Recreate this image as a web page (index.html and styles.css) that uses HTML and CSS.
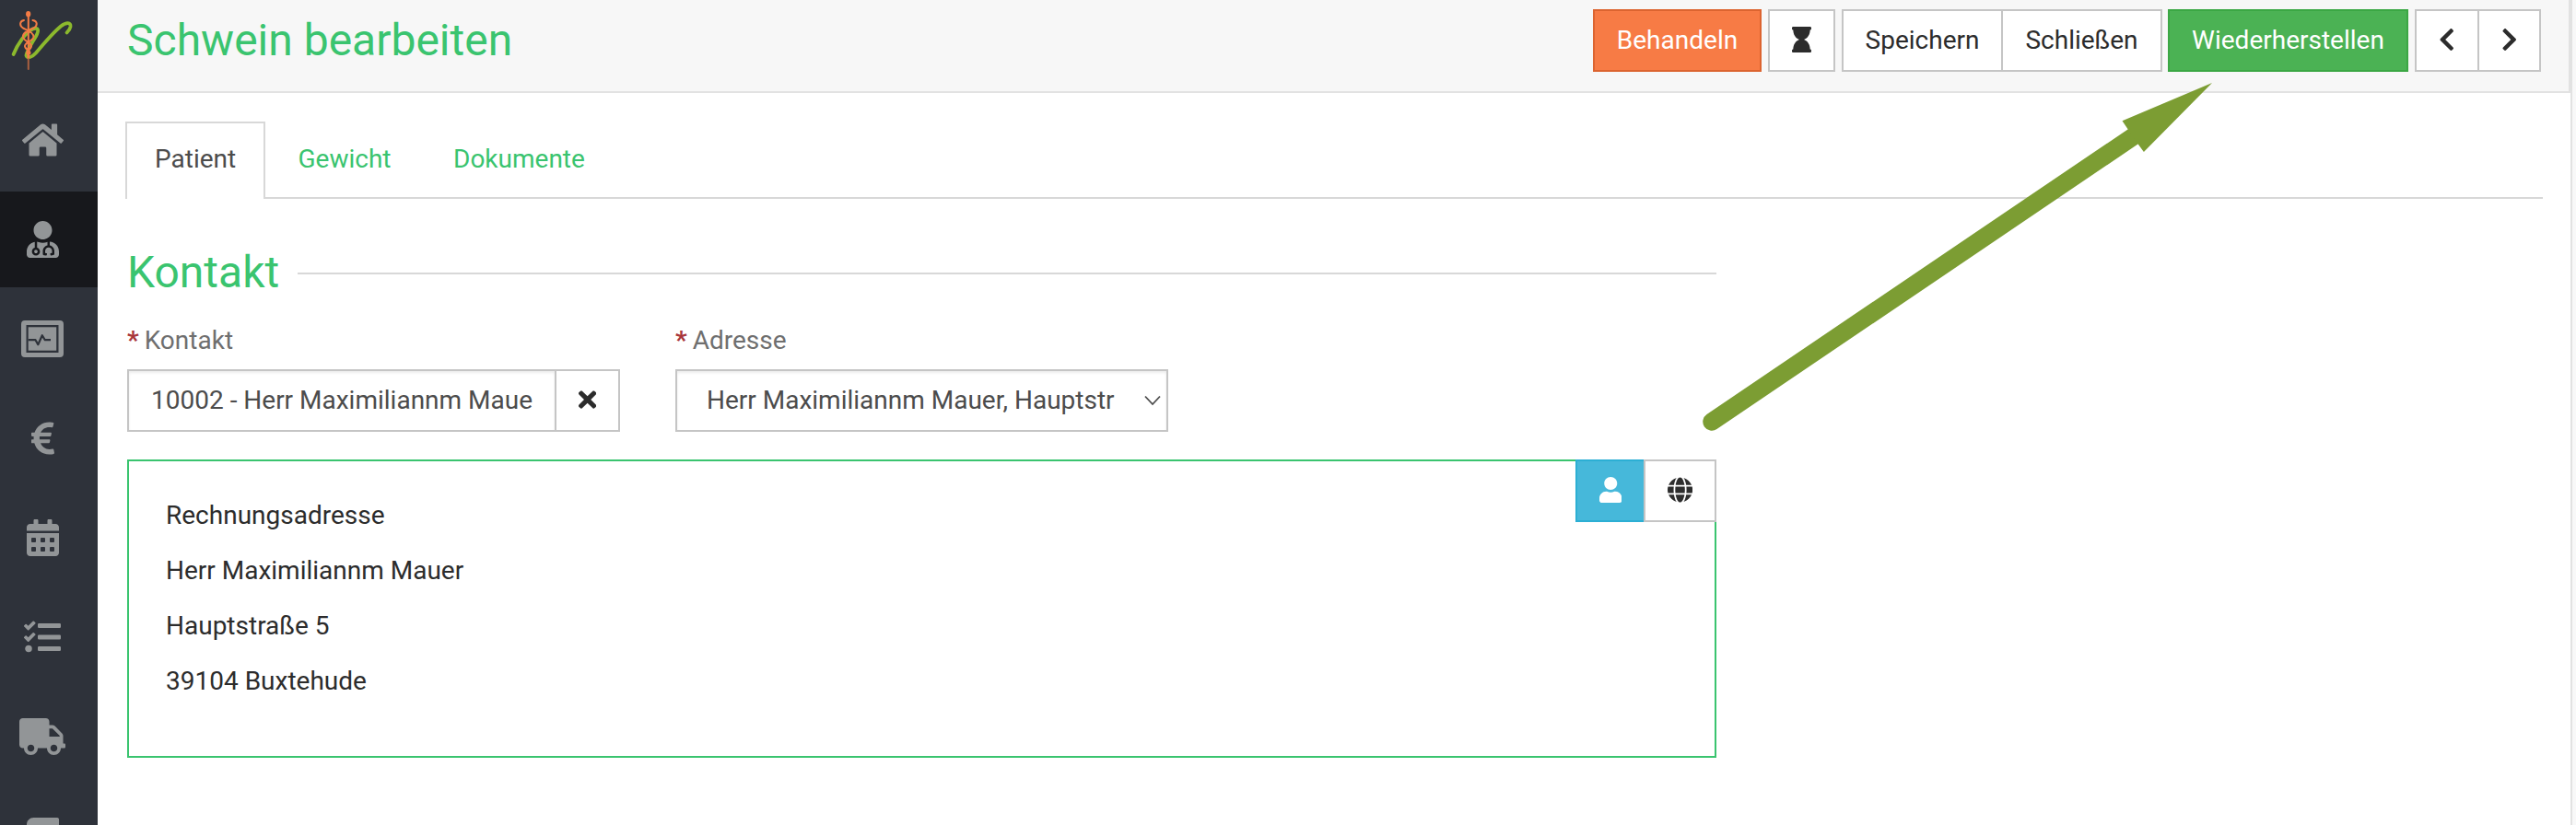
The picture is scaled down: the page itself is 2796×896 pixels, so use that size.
FILE: index.html
```html
<!DOCTYPE html>
<html lang="de">
<head>
<meta charset="utf-8">
<title>Schwein bearbeiten</title>
<link rel="stylesheet" href="styles.css">
</head>
<body>
<div class="app">
  <nav class="sidebar">
    <a class="logo">
      <svg width="76" height="76" viewBox="0 0 76 76" fill="none" stroke-linecap="round">
        <path d="M6.600 53C11 42 20 29 27.500 25.500C34 23 34.500 27 31 33.500C27 40 20 51 20.500 54.500C21.500 58 27 56 31 51.500C39 42 50 29 58 22.500C64 18 69 18 68.500 23C68 26 66 28 64.500 29.500" stroke="#8cb92d" stroke-width="3.800"/>
        <g stroke="#f47c45" stroke-width="2">
          <path d="M22.800 10V52"/>
          <path d="M22.800 52V69" stroke="#a9603f"/>
          <path d="M18 16C13 17 13 22 17 24.500C21 26.500 29 29 28.500 34C28 39 18 40 19 44.500C19.500 48 25 48 24.500 52M27.500 16C33 17 33 22 28.500 24.500C24 26.500 16.500 29 17 34C17.500 39 26.500 40 26 44.500C25.500 48 20.500 48 21 52"/>
          <path d="M22.800 50V56" stroke-width="3"/>
        </g>
        <ellipse cx="22.700" cy="9.200" rx="2.600" ry="3.200" fill="#f47c45"/>
      </svg>
    </a>
    <a class="nav-item"><svg width="45" height="40" viewBox="0 0 576 512"><path d="M280.37 148.26L96 300.11V464a16 16 0 0 0 16 16l112.06-.29a16 16 0 0 0 15.92-16V368a16 16 0 0 1 16-16h64a16 16 0 0 1 16 16v95.64a16 16 0 0 0 16 16.05L464 480a16 16 0 0 0 16-16V300L295.67 148.26a12.19 12.19 0 0 0-15.3 0zM571.6 251.47L488 182.56V44.050a12 12 0 0 0-12-12h-56a12 12 0 0 0-12 12v72.610L318.47 43a48 48 0 0 0-61 0L4.340 251.47a12 12 0 0 0-1.600 16.900l25.500 31A12 12 0 0 0 45.150 301l235.22-193.74a12.190 12.190 0 0 1 15.300 0L530.9 301a12 12 0 0 0 16.900-1.600l25.500-31a12 12 0 0 0-1.700-16.930z"/></svg></a>
    <a class="nav-item active"><svg width="35" height="40" viewBox="0 0 448 512"><path d="M224 256c70.700 0 128-57.300 128-128S294.700 0 224 0 96 57.300 96 128s57.300 128 128 128zM104 424c0 13.300 10.700 24 24 24s24-10.700 24-24-10.700-24-24-24-24 10.700-24 24zm216-135.400v49c36.500 7.400 64 39.800 64 78.400v41.700c0 7.600-5.400 14.200-12.900 15.700l-32.200 6.400c-4.300.9-8.500-1.900-9.400-6.300l-3.100-15.700c-.9-4.300 1.900-8.600 6.300-9.400l19.300-3.900V416c0-62.800-96-65.100-96 1.900v26.700l19.300 3.900c4.300.9 7.100 5.100 6.300 9.400l-3.100 15.700c-.9 4.300-5.100 7.100-9.400 6.300l-31.200-4.200c-7.900-1.100-13.800-7.800-13.800-15.900V416c0-38.600 27.500-70.900 64-78.400v-45.200c-2.200.7-4.400 1.100-6.600 1.900-18 6.300-37.300 9.800-57.400 9.800s-39.400-3.500-57.400-9.800c-7.400-2.600-14.900-4.200-22.600-5.200v81.600c23.100 6.900 40 28.100 40 53.400 0 30.900-25.100 56-56 56s-56-25.100-56-56c0-25.300 16.900-46.500 40-53.400v-80.400C48.500 301 0 355.800 0 422.400v44.800C0 491.900 20.100 512 44.800 512h358.400c24.700 0 44.800-20.100 44.800-44.800v-44.800c0-72-56.800-130.300-128-133.800z"/></svg></a>
    <a class="nav-item"><svg width="46" height="40" viewBox="0 0 46 40"><path fill-rule="evenodd" d="M4 0H42a4 4 0 0 1 4 4V36a4 4 0 0 1-4 4H4a4 4 0 0 1-4-4V4a4 4 0 0 1 4-4zM5.500 5V35H40.500V5z"/><path d="M7.700 7.300H38.200V32.700H7.700z"/><path class="pulse" d="M7.700 21.200H15.500L18.300 26.200L22.800 16.200L25.800 21.200H32"/></svg></a>
    <a class="nav-item"><svg width="25" height="40" viewBox="0 0 320 512"><path d="M310.706 413.765c-1.314-6.630-7.835-10.872-14.424-9.369-10.692 2.439-27.422 5.413-45.426 5.413-56.763 0-101.929-34.790-121.461-85.449h113.689a12 12 0 0 0 11.708-9.369l6.373-28.360c1.686-7.502-4.019-14.631-11.708-14.631H115.220c-1.210-14.328-1.414-28.287.137-42.245H261.950a12 12 0 0 0 11.723-9.434l6.512-29.755c1.638-7.484-4.061-14.566-11.723-14.566H130.184c20.633-44.991 62.690-75.030 117.619-75.030 14.486 0 28.564 2.250 37.851 4.145 6.216 1.268 12.347-2.498 14.002-8.623l11.991-44.368c1.822-6.741-2.465-13.616-9.326-14.917C290.217 34.912 270.710 32 249.635 32 152.451 32 74.030 92.252 45.075 176H12c-6.627 0-12 5.373-12 12v29.755c0 6.627 5.373 12 12 12h21.569c-1.009 13.607-1.181 29.287-.181 42.245H12c-6.627 0-12 5.373-12 12v28.360c0 6.627 5.373 12 12 12h30.114C67.139 414.692 145.264 480 249.635 480c26.301 0 48.562-4.544 61.101-7.788 6.167-1.595 10.027-7.708 8.788-13.957l-8.818-44.490z"/></svg></a>
    <a class="nav-item"><svg width="35" height="40" viewBox="0 0 448 512"><path fill-rule="evenodd" d="M400 64h-48V16c0-8.800-7.200-16-16-16h-32c-8.800 0-16 7.200-16 16v48H160V16c0-8.800-7.200-16-16-16h-32c-8.800 0-16 7.200-16 16v48H48C21.500 64 0 85.500 0 112v48h448v-48c0-26.500-21.500-48-48-48zM0 192v272c0 26.500 21.500 48 48 48h352c26.500 0 48-21.500 48-48V192zM76 256h40q12 0 12 12v40q0 12-12 12H76q-12 0-12-12v-40q0-12 12-12zM204 256h40q12 0 12 12v40q0 12-12 12h-40q-12 0-12-12v-40q0-12 12-12zM332 256h40q12 0 12 12v40q0 12-12 12h-40q-12 0-12-12v-40q0-12 12-12zM76 384h40q12 0 12 12v40q0 12-12 12H76q-12 0-12-12v-40q0-12 12-12zM204 384h40q12 0 12 12v40q0 12-12 12h-40q-12 0-12-12v-40q0-12 12-12zM332 384h40q12 0 12 12v40q0 12-12 12h-40q-12 0-12-12v-40q0-12 12-12z"/></svg></a>
    <a class="nav-item"><svg width="40" height="40" viewBox="0 0 512 512"><path d="M139.610 35.500a12 12 0 0 0-17 0L58.930 98.810l-22.700-22.120a12 12 0 0 0-17 0L3.530 92.410a12 12 0 0 0 0 17l47.590 47.400a12.780 12.780 0 0 0 17.610 0l15.590-15.620L156.520 69a12.090 12.090 0 0 0 .09-17zm0 159.190a12 12 0 0 0-17 0l-63.680 63.720-22.700-22.100a12 12 0 0 0-17 0L3.530 252a12 12 0 0 0 0 17L51 316.500a12.770 12.770 0 0 0 17.600 0l15.700-15.690 72.200-72.220a12 12 0 0 0 .09-16.900zM64 368c-26.490 0-48.590 21.500-48.590 48S37.530 464 64 464a48 48 0 0 0 0-96zm432 16H208a16 16 0 0 0-16 16v32a16 16 0 0 0 16 16h288a16 16 0 0 0 16-16v-32a16 16 0 0 0-16-16zm0-320H208a16 16 0 0 0-16 16v32a16 16 0 0 0 16 16h288a16 16 0 0 0 16-16V80a16 16 0 0 0-16-16zm0 160H208a16 16 0 0 0-16 16v32a16 16 0 0 0 16 16h288a16 16 0 0 0 16-16v-32a16 16 0 0 0-16-16z"/></svg></a>
    <a class="nav-item"><svg width="50" height="40" viewBox="0 0 640 512"><path d="M624 352h-16V243.900c0-12.700-5.100-24.900-14.100-33.900L494 110.100c-9-9-21.200-14.100-33.900-14.100H416V48c0-26.500-21.500-48-48-48H48C21.500 0 0 21.500 0 48v320c0 26.500 21.500 48 48 48h16c0 53 43 96 96 96s96-43 96-96h128c0 53 43 96 96 96s96-43 96-96h48c8.800 0 16-7.200 16-16v-32c0-8.800-7.200-16-16-16zM160 464c-26.500 0-48-21.500-48-48s21.500-48 48-48 48 21.500 48 48-21.500 48-48 48zm320 0c-26.500 0-48-21.500-48-48s21.500-48 48-48 48 21.500 48 48-21.500 48-48 48zm80-208H416V144h44.100l99.900 99.900V256z"/></svg></a>
    <a class="nav-item"><svg width="35" height="40" viewBox="0 0 448 512"><path d="M448 360V24c0-13.300-10.700-24-24-24H96C43 0 0 43 0 96v320c0 53 43 96 96 96h352z"/></svg></a>
  </nav>

  <main class="panel">
    <header class="header">
      <h1 class="title">Schwein bearbeiten</h1>
      <div class="toolbar">
        <button class="btn btn-orange w-treat">Behandeln</button>
        <button class="btn w-wait"><svg width="21" height="28" viewBox="0 0 384 512"><path d="M360 64c13.255 0 24-10.745 24-24V24c0-13.255-10.745-24-24-24H24C10.745 0 0 10.745 0 24v16c0 13.255 10.745 24 24 24 0 90.965 51.016 167.734 120.842 192C75.016 280.266 24 357.035 24 448c-13.255 0-24 10.745-24 24v16c0 13.255 10.745 24 24 24h336c13.255 0 24-10.745 24-24v-16c0-13.255-10.745-24-24-24 0-90.965-51.016-167.734-120.842-192C308.984 231.734 360 154.965 360 64z"/></svg></button>
        <div class="group">
          <button class="btn w-save">Speichern</button>
          <button class="btn w-close">Schließen</button>
        </div>
        <button class="btn btn-green w-restore">Wiederherstellen</button>
        <div class="group">
          <button class="btn w-prev"><svg width="17.500" height="28" viewBox="0 0 320 512"><path d="M34.520 239.030L228.870 44.690c9.370-9.370 24.570-9.370 33.940 0l22.670 22.670c9.360 9.360 9.370 24.520.04 33.900L131.490 256l154.020 154.750c9.340 9.380 9.320 24.540-.04 33.900l-22.670 22.670c-9.370 9.370-24.570 9.370-33.940 0L34.520 272.970c-9.370-9.370-9.370-24.570 0-33.940z"/></svg></button>
          <button class="btn w-next"><svg width="17.500" height="28" viewBox="0 0 320 512"><path d="M285.476 272.971L91.132 467.314c-9.373 9.373-24.569 9.373-33.941 0l-22.667-22.667c-9.357-9.357-9.375-24.522-.04-33.901L188.505 256 34.484 101.255c-9.335-9.379-9.317-24.544.04-33.901l22.667-22.667c9.373-9.373 24.569-9.373 33.941 0L285.475 239.030c9.373 9.372 9.373 24.568.001 33.941z"/></svg></button>
        </div>
      </div>
    </header>

    <div class="content">
      <div class="tabs">
        <a class="tab tab-active">Patient</a>
        <a class="tab">Gewicht</a>
        <a class="tab">Dokumente</a>
      </div>

      <section class="contact">
        <h2 class="legend">Kontakt</h2>
        <div class="fields">
          <div class="field">
            <label class="label"><b class="req">*</b> Kontakt</label>
            <div class="input-group">
              <div class="control control-text">10002 - Herr Maximiliannm Maue</div>
              <button class="btn clear"><svg width="19.250" height="28" viewBox="0 0 352 512"><path d="M242.720 256l100.070-100.070c12.280-12.280 12.280-32.190 0-44.480l-22.240-22.240c-12.280-12.280-32.190-12.280-44.480 0L176 189.280 75.930 89.210c-12.280-12.280-32.190-12.280-44.480 0L9.210 111.450c-12.280 12.280-12.280 32.190 0 44.480L109.280 256 9.210 356.070c-12.280 12.280-12.280 32.190 0 44.480l22.240 22.240c12.280 12.280 32.200 12.280 44.480 0L176 322.720l100.070 100.070c12.280 12.280 32.200 12.280 44.480 0l22.240-22.240c12.280-12.280 12.280-32.190 0-44.480L242.720 256z"/></svg></button>
            </div>
          </div>
          <div class="field">
            <label class="label"><b class="req">*</b> Adresse</label>
            <div class="control control-select">
              <span>Herr Maximiliannm Mauer, Hauptstr</span>
              <svg class="caret" width="18" height="12" viewBox="0 0 18 12"><path d="M1 1.500L9 10L17 1.500"/></svg>
            </div>
          </div>
        </div>
        <div class="card">
          <div class="card-tools">
            <button class="btn btn-blue w-person"><svg width="24.500" height="28" viewBox="0 0 448 512"><path d="M224 256c70.700 0 128-57.300 128-128S294.700 0 224 0 96 57.300 96 128s57.300 128 128 128zm89.600 32h-16.700c-22.200 10.200-46.900 16-72.900 16s-50.600-5.800-72.900-16h-16.700C60.200 288 0 348.200 0 422.400V464c0 26.500 21.500 48 48 48h352c26.500 0 48-21.500 48-48v-41.600c0-74.200-60.200-134.400-134.400-134.400z"/></svg></button>
            <button class="btn w-globe"><svg width="27.125" height="28" viewBox="0 0 496 512"><path d="M336.500 160C322 70.700 287.800 8 248 8s-74 62.700-88.500 152h177zM152 256c0 22.200 1.200 43.500 3.300 64h185.300c2.100-20.500 3.300-41.800 3.300-64s-1.200-43.500-3.300-64H155.300c-2.100 20.500-3.300 41.800-3.300 64zm324.700-96c-28.600-67.900-86.500-120.400-158-141.600 24.400 33.800 41.200 84.700 50 141.600h108zM177.200 18.400C105.800 39.600 47.800 92.100 19.300 160h108c8.700-56.900 25.500-107.800 49.900-141.600zM487.400 192H372.700c2.100 21 3.300 42.500 3.300 64s-1.200 43-3.300 64h114.600c5.500-20.500 8.600-41.800 8.600-64s-3.100-43.500-8.500-64zM120 256c0-21.500 1.200-43 3.300-64H8.600C3.200 212.500 0 233.800 0 256s3.200 43.500 8.600 64h114.600c-2-21-3.200-42.500-3.200-64zm39.500 96c14.500 89.300 48.700 152 88.500 152s74-62.700 88.500-152h-177zm159.300 141.600c71.400-21.200 129.400-73.700 158-141.600h-108c-8.800 56.900-25.600 107.800-50 141.600zM19.300 352c28.600 67.900 86.500 120.400 158 141.600-24.400-33.800-41.200-84.700-50-141.600h-108z"/></svg></button>
          </div>
          <p>Rechnungsadresse</p>
          <p>Herr Maximiliannm Mauer</p>
          <p>Hauptstraße 5</p>
          <p>39104 Buxtehude</p>
        </div>
      </section>
    </div>
  </main>

  <svg class="arrow" width="560" height="390" viewBox="1846 84 560 390">
    <path d="M1858 458L2318 146.500" stroke="#7c9d33" stroke-width="19.500" stroke-linecap="round"/>
    <path d="M2401 90L2303.500 131.300L2309.900 140.700L2320.500 156.300L2326.900 165z" fill="#7c9d33"/>
  </svg>
</div>
</body>
</html>
```
FILE: styles.css
```css
* { box-sizing: border-box; }

body {
  margin: 0;
  background: #f8f8f8;
  color: #2c2c2c;
  font: 28px/40px Roboto, "Liberation Sans", sans-serif;
}

svg { display: block; flex: none; fill: currentColor; }

.app {
  position: relative;
  display: flex;
  width: 2796px;
  height: 896px;
  overflow: hidden;
}

/* Sidebar */
.sidebar {
  flex: none;
  width: 106px;
  display: flex;
  flex-direction: column;
  gap: 4px;
  background: #2e323a;
  color: #929597;
}
.logo { flex: none; height: 96px; padding: 6px 0 0 8px; }
.logo svg { fill: none; }
.nav-item {
  flex: none;
  height: 104px;
  display: flex;
  align-items: center;
  justify-content: center;
  padding-right: 14px;
}
.nav-item.active { background: #17181c; }
.logo + .nav-item { margin-top: 0; }
.pulse { fill: none; stroke: #2e323a; stroke-width: 2.2; stroke-linejoin: round; }

/* Panel and header */
.panel {
  flex: none;
  width: 2686px;
  background: #fff;
  border-right: 2px solid #e2e2e2;
}
.header {
  height: 101px;
  display: flex;
  justify-content: space-between;
  align-items: flex-start;
  padding: 10px 30px 0 32px;
  background: #f7f7f7;
  border-right: 2px solid #e2e2e2;
  border-bottom: 2px solid #e2e2e2;
}
.title, .legend { margin: 0; font-size: 48px; font-weight: 400; color: #3ac46f; }
.title { line-height: 67px; }
.toolbar { display: flex; gap: 7px; }
.group { display: flex; }
.group .btn + .btn { margin-left: -2px; }

.btn {
  flex: none;
  height: 68px;
  display: flex;
  align-items: center;
  justify-content: center;
  margin: 0;
  padding: 0;
  border: 2px solid #c5c5c5;
  border-radius: 0;
  background: #fff;
  color: #2c2c2c;
  font: inherit;
}
.btn svg { margin-bottom: 3px; }
.btn-orange { background: #f77b45; border-color: #dc6430; color: #fff; }
.btn-green { background: #4bb254; border-color: #3ba744; color: #fff; }
.btn-blue { background: #46b8da; border-color: #2cafd4; color: #fff; }
.w-treat { width: 183px; }
.w-wait { width: 73px; }
.w-save { width: 175px; }
.w-close { width: 175px; }
.w-restore { width: 261px; margin-left: -1px; }
.w-prev { width: 70px; }
.w-next { width: 69px; }

/* Tabs */
.content { padding: 31px 30px 0 30px; }
.tabs {
  height: 84px;
  display: flex;
  gap: 3.5px;
  border-bottom: 2px solid #d8d8d8;
}
.tab {
  height: 84px;
  padding: 19px 30px 0;
  border: 2px solid transparent;
  border-bottom: 0;
  color: #3ac46f;
}
.tab-active {
  width: 152px;
  background: #fff;
  border-color: #d8d8d8;
  color: #4c4c4c;
}

/* Contact section */
.contact { width: 1727px; padding: 49px 0 0 2px; }
.legend {
  display: flex;
  align-items: center;
  gap: 20px;
  margin-bottom: 2px;
  line-height: 62px;
}
.legend::after {
  content: "";
  flex: 1;
  height: 2px;
  margin-top: 2px;
  background: #d8d8d8;
}
.fields { display: flex; gap: 60px; padding-top: 21px; }
.field { width: 535px; }
.label { display: block; height: 51px; color: #6f6f6f; word-spacing: -1px; }
.req { color: #a9353a; }
.input-group { display: flex; }
.control {
  display: flex;
  align-items: center;
  height: 68px;
  border: 2px solid #c5c5c5;
  background: #fff;
  box-shadow: inset 0 2px 3px rgba(0, 0, 0, .08);
  color: #4c4c4c;
  white-space: nowrap;
}
.control-text { width: 466px; padding-left: 24px; }
.clear { width: 71px; margin-left: -2px; }
.control-select { justify-content: space-between; padding: 0 6px 0 32px; }
.caret { fill: none; stroke: #4c4c4c; stroke-width: 1.800; }

.card {
  position: relative;
  width: 1725px;
  height: 324px;
  margin-top: 30px;
  padding: 39px 40px 0;
  border: 2px solid #3ac46f;
}
.card p { margin: 0 0 20px; }
.card-tools { position: absolute; top: -2px; right: -2px; display: flex; }
.w-person { width: 76px; }
.w-globe { width: 79px; margin-left: -2px; }

.arrow { position: absolute; left: 1846px; top: 84px; }
```
